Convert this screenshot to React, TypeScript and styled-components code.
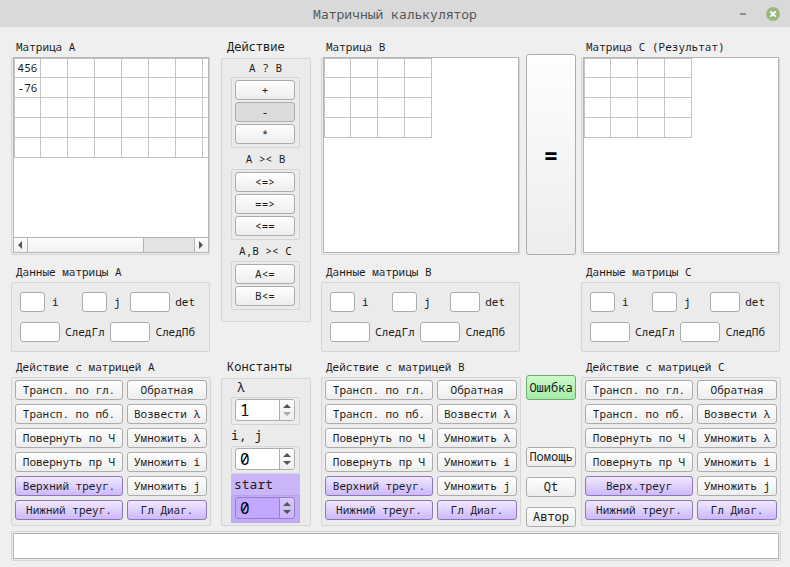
import React, { useId, useState } from "react";
import styled, { createGlobalStyle, css } from "styled-components";

const GlobalStyle = createGlobalStyle`
  *, *::before, *::after { box-sizing: border-box; }
  body {
    margin: 0;
    background: #efefef;
    color: #1a1a1a;
    font: 11px/16px "Noto Sans Mono", "Noto Mono", "DejaVu Sans Mono", monospace;
  }
  button, input { font: inherit; color: inherit; margin: 0; }
`;

const Window = styled.div`
  display: flex;
  flex-direction: column;
  min-height: 100vh;
`;

const TitleBar = styled.header`
  display: grid;
  grid-template-columns: 1fr auto 1fr;
  align-items: center;
  height: 27px;
  padding: 0 9px;
  background: #d9d9d9;
`;

const Title = styled.h1`
  grid-column: 2;
  margin: 0;
  font-size: 13px;
  font-weight: 400;
  color: #555;
`;

const WindowButtons = styled.div`
  display: flex;
  justify-content: flex-end;
  gap: 16px;
`;

const WindowButton = styled.button`
  display: flex;
  padding: 0;
  border: 0;
  background: none;
`;

const Main = styled.main`
  flex: 1;
  display: flex;
  flex-direction: column;
  gap: 4px;
  padding: 10px 9px 6px 11px;
`;

const Columns = styled.div`
  flex: 1;
  display: grid;
  grid-template-columns: minmax(200px, 1fr) 110px minmax(200px, 1fr) 60px minmax(200px, 1fr);
`;

const MatrixColumn = styled.section`
  display: flex;
  flex-direction: column;
  min-width: 0;
  padding-bottom: 1px;
`;

const OperationsColumn = styled(MatrixColumn)`
  justify-content: space-between;
  padding: 0 10px 1px;
`;

const CommandColumn = styled.section`
  display: flex;
  flex-direction: column;
  padding: 17px 5px 0;
`;

const Heading = styled.h2<{ $size?: number; $gap?: number }>`
  margin: ${(p) => p.$gap ?? 0}px 0 0;
  padding-left: ${(p) => (p.$size ? 6 : 5)}px;
  font-size: ${(p) => p.$size ?? 11}px;
  font-weight: 400;
  line-height: 20px;
  white-space: nowrap;
`;

const panel = css`
  border: 1px solid #d5d5d5;
  border-radius: 2px;
  background: #ebebeb;
`;

const MatrixFrame = styled.div`
  ${panel}
  flex: 1;
  display: flex;
  border-top: 0;
  margin-right: 1px;
  padding: 0 0 1px 1px;
`;

const MatrixView = styled.div`
  flex: 1;
  display: flex;
  flex-direction: column;
  justify-content: space-between;
  min-width: 0;
  min-height: 160px;
  overflow: hidden;
  border: 1px solid #b4b4b4;
  background: #fff;
`;

const Grid = styled.table`
  table-layout: fixed;
  width: max-content;
  border-collapse: separate;
  border-spacing: 0;
`;

const Cell = styled.td`
  width: 27px;
  min-width: 27px;
  height: 20px;
  padding: 0;
  border: 0 solid #c4c4c4;
  border-width: 0 1px 1px 0;
  text-align: center;
  line-height: 18px;
  &:first-child { border-left-width: 1px; }
  tr:first-child > & { border-top-width: 1px; }
`;

const ScrollBar = styled.div`
  display: flex;
  height: 15px;
  border-top: 1px solid #b4b4b4;
  background: #e4e4e4;
`;

const ScrollButton = styled.button<{ $end?: boolean }>`
  display: flex;
  align-items: center;
  justify-content: center;
  width: 14px;
  padding: 0;
  border: solid #b4b4b4;
  border-width: ${(p) => (p.$end ? "0 0 0 1px" : "0 1px 0 0")};
  background: linear-gradient(#fdfdfd, #f0f0f0);
`;

const ScrollTrack = styled.div`
  flex: 1;
`;

const ScrollThumb = styled.div`
  width: 70%;
  height: 100%;
  border-right: 1px solid #b4b4b4;
  background: linear-gradient(#fdfdfd, #f0f0f0);
`;

const InfoPanel = styled.div`
  ${panel}
  display: flex;
  flex-direction: column;
  gap: 10px;
  margin-right: 1px;
  padding: 9px 14px 9px 8px;
`;

const InfoRow = styled.div`
  display: flex;
  gap: 5px;
`;

const FieldLabel = styled.label<{ $width?: number; $last?: boolean; $gap: number }>`
  display: flex;
  align-items: center;
  gap: ${(p) => p.$gap}px;
  width: ${(p) => (p.$width ? `${p.$width}px` : "auto")};
  margin-left: ${(p) => (p.$last ? "auto" : "0")};
`;

const Field = styled.input<{ $width: number }>`
  width: ${(p) => p.$width}px;
  height: 20px;
  padding: 0 3px;
  border: 1px solid #acacac;
  border-radius: 3px;
  background: #fff;
`;

const ActionPanel = styled.div`
  ${panel}
  display: grid;
  grid-template-columns: 108fr 80fr;
  gap: 4px;
  padding: 2px 3px 5px;
`;

const tones = {
  plain: css`
    border-color: #acacac;
    background: linear-gradient(#fefefe, #ededed);
  `,
  pressed: css`
    border-color: #acacac;
    background: #dcdcdc;
  `,
  violet: css`
    border-color: #8d76ba;
    background: linear-gradient(#f0e8ff, #ccb8fa);
  `,
  green: css`
    border-color: #6cab6e;
    background: linear-gradient(#cdfacb, #a5eba6);
  `,
};

const Button = styled.button<{ $tone?: keyof typeof tones }>`
  display: flex;
  align-items: center;
  justify-content: center;
  height: 20px;
  padding: 0;
  border: 1px solid;
  border-radius: 3px;
  line-height: 18px;
  white-space: nowrap;
  ${(p) => tones[p.$tone ?? "plain"]}
`;

const CommandButton = styled(Button)`
  font-size: 12px;
`;

const ErrorButton = styled(CommandButton)`
  height: 25px;
`;

const EqualsButton = styled(Button)`
  flex: 1;
  font-size: 24px;
  font-weight: 700;
  color: #000;
`;

const Commands = styled.div`
  display: flex;
  flex-direction: column;
  justify-content: space-between;
  height: 152px;
  margin-top: 120px;
`;

const CommandStack = styled.div`
  display: flex;
  flex-direction: column;
  gap: 10px;
`;

const OuterPanel = styled.div<{ $bottom?: number }>`
  ${panel}
  padding: 0 10px ${(p) => p.$bottom ?? 0}px 9px;
  margin-top: 1px;
`;

const GroupLabel = styled.div<{ $first?: boolean }>`
  height: ${(p) => (p.$first ? 18 : 21)}px;
  line-height: ${(p) => (p.$first ? 18 : 21)}px;
  text-align: center;
`;

const ButtonGroup = styled.div`
  ${panel}
  display: flex;
  flex-direction: column;
  gap: 2px;
  padding: 2px 4px 3px 3px;
`;

const Constant = styled.div<{ $violet?: boolean }>`
  ${(p) => p.$violet && css`background: #c9b5f8;`}
`;

const ConstantLabel = styled.label<{ $indent?: number; $first?: boolean }>`
  display: block;
  height: ${(p) => (p.$first ? 18 : 21)}px;
  padding-left: ${(p) => p.$indent ?? 0}px;
  font-size: 13px;
  line-height: ${(p) => (p.$first ? 16 : 21)}px;
`;

const SpinFrame = styled.div<{ $violet?: boolean }>`
  ${panel}
  padding: 1px 4px 3px 3px;
  ${(p) => p.$violet && css`
    border-color: #b9a4ea;
    background: #c2acf5;
  `}
`;

const SpinBox = styled.div<{ $violet?: boolean }>`
  display: flex;
  height: 22px;
  overflow: hidden;
  border: 1px solid ${(p) => (p.$violet ? "#9480c6" : "#acacac")};
  border-radius: 3px;
  background: ${(p) => (p.$violet ? "#c3a7ff" : "#fff")};
`;

const SpinInput = styled.input`
  flex: 1;
  min-width: 0;
  padding: 0 0 0 4px;
  border: 0;
  background: none;
  font-size: 16px;
  color: #000;
  appearance: textfield;
  &::-webkit-inner-spin-button { appearance: none; }
`;

const SpinButtons = styled.div<{ $violet?: boolean }>`
  display: flex;
  flex-direction: column;
  justify-content: center;
  width: 15px;
  border-left: 1px solid ${(p) => (p.$violet ? "#9480c6" : "#acacac")};
  background: ${(p) => (p.$violet ? "linear-gradient(#d8c8fb, #c9b5f8)" : "linear-gradient(#fdfdfd, #eee)")};
`;

const SpinButton = styled.button`
  height: 8px;
  display: flex;
  align-items: center;
  justify-content: center;
  padding: 0;
  border: 0;
  background: none;
  color: #555;
  &:disabled { color: #aaa; }
`;

const OutputFrame = styled.div`
  ${panel}
  display: flex;
  padding: 1px;
`;

const Output = styled.input`
  flex: 1;
  height: 26px;
  min-width: 0;
  padding: 0 4px;
  border: 1px solid #b4b4b4;
  background: #fff;
`;

type Tone = keyof typeof tones;
type Letter = "A" | "B" | "C";

function MatrixGrid({ rows, cols, values = {} }: { rows: number; cols: number; values?: Record<string, string> }) {
  return (
    <Grid>
      <tbody>
        {Array.from({ length: rows }, (_, r) => (
          <tr key={r}>
            {Array.from({ length: cols }, (_, c) => (
              <Cell key={c}>{values[`${r},${c}`]}</Cell>
            ))}
          </tr>
        ))}
      </tbody>
    </Grid>
  );
}

function HorizontalScroll() {
  return (
    <ScrollBar>
      <ScrollButton aria-label="Влево">
        <svg width="5" height="8" viewBox="0 0 5 8"><path d="M4 0v8L0 4z" fill="#555" /></svg>
      </ScrollButton>
      <ScrollTrack><ScrollThumb /></ScrollTrack>
      <ScrollButton $end aria-label="Вправо">
        <svg width="5" height="8" viewBox="0 0 5 8"><path d="M0 0v8l4-4z" fill="#555" /></svg>
      </ScrollButton>
    </ScrollBar>
  );
}

function matrixActions(letter: Letter): [string, Tone][] {
  return [
    ["Трансп. по гл.", "plain"],
    ["Обратная", "plain"],
    ["Трансп. по пб.", "plain"],
    ["Возвести λ", "plain"],
    ["Повернуть по Ч", "plain"],
    ["Умножить λ", "plain"],
    ["Повернуть пр Ч", "plain"],
    ["Умножить i", "plain"],
    [letter === "C" ? "Верх.треуг" : "Верхний треуг.", "violet"],
    ["Умножить j", "plain"],
    ["Нижний треуг.", "violet"],
    ["Гл Диаг.", "violet"],
  ];
}

function Matrix({ letter, title, children }: { letter: Letter; title: string; children: React.ReactNode }) {
  return (
    <MatrixColumn>
      <Heading>{title}</Heading>
      <MatrixFrame>
        <MatrixView>{children}</MatrixView>
      </MatrixFrame>
      <Heading $gap={7}>Данные матрицы {letter}</Heading>
      <InfoPanel>
        <InfoRow>
          <FieldLabel $gap={7} $width={57}><Field $width={25} />i</FieldLabel>
          <FieldLabel $gap={7}><Field $width={25} />j</FieldLabel>
          <FieldLabel $gap={5} $last><Field $width={letter === "A" ? 40 : 30} />det</FieldLabel>
        </InfoRow>
        <InfoRow>
          <FieldLabel $gap={5}><Field $width={40} />СледГл</FieldLabel>
          <FieldLabel $gap={5} $last><Field $width={40} />СледПб</FieldLabel>
        </InfoRow>
      </InfoPanel>
      <Heading $gap={5}>Действие с матрицей {letter}</Heading>
      <ActionPanel>
        {matrixActions(letter).map(([text, tone]) => (
          <Button key={text} $tone={tone}>{text}</Button>
        ))}
      </ActionPanel>
    </MatrixColumn>
  );
}

interface SpinProps {
  label: string;
  initial: number;
  min: number;
  indent?: number;
  first?: boolean;
  violet?: boolean;
}

function Spin({ label, initial, min, indent, first, violet }: SpinProps) {
  const id = useId();
  const [value, setValue] = useState(initial);
  return (
    <Constant $violet={violet}>
      <ConstantLabel htmlFor={id} $indent={indent} $first={first}>{label}</ConstantLabel>
      <SpinFrame $violet={violet}>
        <SpinBox $violet={violet}>
          <SpinInput id={id} type="number" value={value} onChange={(e) => setValue(Number(e.target.value))} />
          <SpinButtons $violet={violet}>
            <SpinButton aria-label="Больше" onClick={() => setValue(value + 1)}>
              <svg width="8" height="4" viewBox="0 0 8 4"><path d="M0 4l4-4 4 4z" fill="currentColor" /></svg>
            </SpinButton>
            <SpinButton aria-label="Меньше" disabled={value <= min} onClick={() => setValue(value - 1)}>
              <svg width="8" height="4" viewBox="0 0 8 4"><path d="M0 0l4 4 4-4z" fill="currentColor" /></svg>
            </SpinButton>
          </SpinButtons>
        </SpinBox>
      </SpinFrame>
    </Constant>
  );
}

export default function App() {
  return (
    <Window>
      <GlobalStyle />
      <TitleBar>
        <Title>Матричный калькулятор</Title>
        <WindowButtons>
          <WindowButton aria-label="Свернуть">
            <svg width="12" height="14" viewBox="0 0 12 14"><path d="M3 6h6v2H3z" fill="#8c8c8c" /></svg>
          </WindowButton>
          <WindowButton aria-label="Закрыть">
            <svg width="16" height="14" viewBox="0 0 16 14">
              <circle cx="8" cy="7" r="7" fill="#9ab87c" />
              <path d="M5.3 4.3l5.4 5.4M10.7 4.3L5.3 9.7" stroke="#fff" strokeWidth="1.8" />
            </svg>
          </WindowButton>
        </WindowButtons>
      </TitleBar>
      <Main>
        <Columns>
          <Matrix letter="A" title="Матрица A">
            <MatrixGrid rows={5} cols={8} values={{ "0,0": "456", "1,0": "-76" }} />
            <HorizontalScroll />
          </Matrix>

          <OperationsColumn>
            <div>
              <Heading $size={12}>Действие</Heading>
              <OuterPanel $bottom={11}>
                <GroupLabel $first>A ? B</GroupLabel>
                <ButtonGroup>
                  <Button>+</Button>
                  <Button $tone="pressed" aria-pressed="true">-</Button>
                  <Button>*</Button>
                </ButtonGroup>
                <GroupLabel>A &gt;&lt; B</GroupLabel>
                <ButtonGroup>
                  <Button>&lt;=&gt;</Button>
                  <Button>==&gt;</Button>
                  <Button>&lt;==</Button>
                </ButtonGroup>
                <GroupLabel>A,B &gt;&lt; C</GroupLabel>
                <ButtonGroup>
                  <Button>A&lt;=</Button>
                  <Button>B&lt;=</Button>
                </ButtonGroup>
              </OuterPanel>
            </div>
            <div>
              <Heading $size={12}>Константы</Heading>
              <OuterPanel $bottom={2}>
                <Spin label="λ" initial={1} min={1} indent={6} first />
                <Spin label="i, j" initial={0} min={-99} />
                <Spin label="start" initial={0} min={-99} indent={3} violet />
              </OuterPanel>
            </div>
          </OperationsColumn>

          <Matrix letter="B" title="Матрица B">
            <MatrixGrid rows={4} cols={4} />
          </Matrix>

          <CommandColumn>
            <EqualsButton>=</EqualsButton>
            <Commands>
              <ErrorButton $tone="green">Ошибка</ErrorButton>
              <CommandStack>
                <CommandButton>Помощь</CommandButton>
                <CommandButton>Qt</CommandButton>
                <CommandButton>Автор</CommandButton>
              </CommandStack>
            </Commands>
          </CommandColumn>

          <Matrix letter="C" title="Матрица C (Результат)">
            <MatrixGrid rows={4} cols={4} />
          </Matrix>
        </Columns>
        <OutputFrame>
          <Output aria-label="Сообщения" />
        </OutputFrame>
      </Main>
    </Window>
  );
}
